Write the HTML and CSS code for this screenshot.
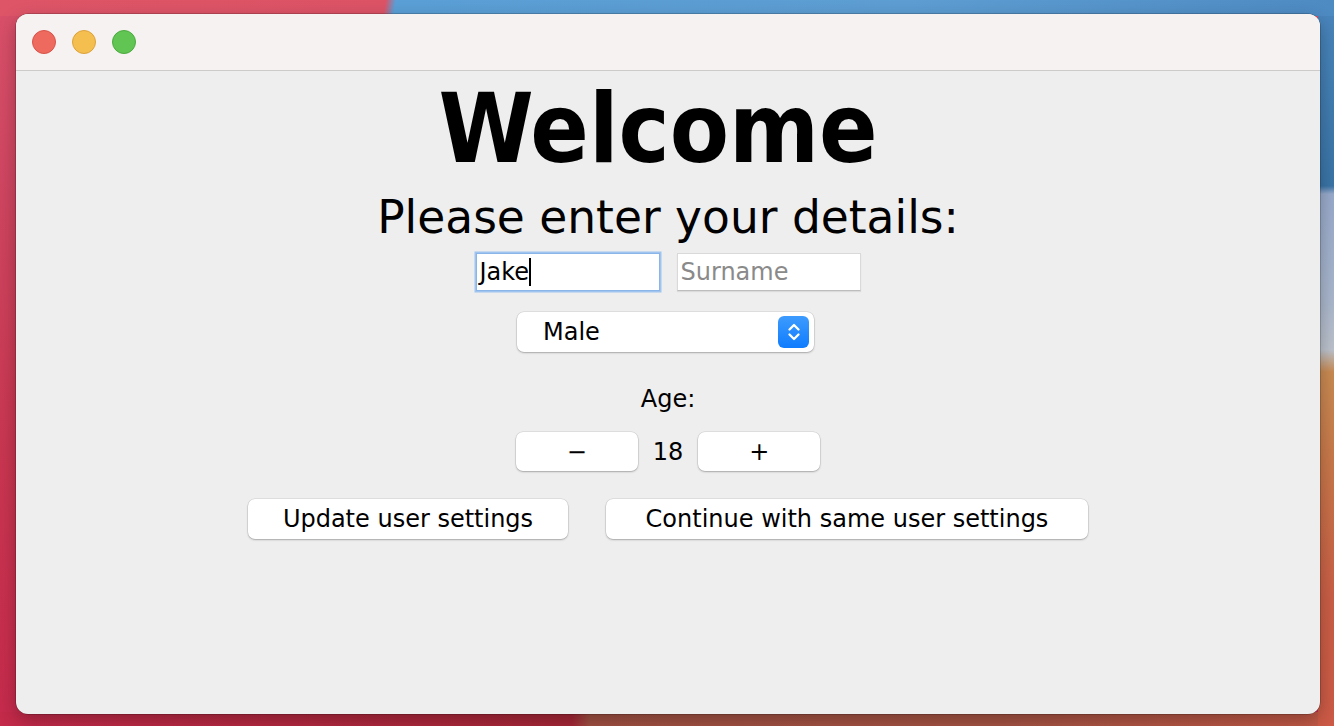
FILE: index.html
```html
<!DOCTYPE html>
<html lang="en">
<head>
<meta charset="utf-8">
<title>Welcome</title>
<link rel="stylesheet" href="styles.css">
</head>
<body>
<div class="window">
  <div class="titlebar">
    <span class="light red"></span>
    <span class="light yellow"></span>
    <span class="light green"></span>
  </div>
  <div class="content">
    <h1 class="title">Welcome</h1>
    <p class="subtitle">Please enter your details:</p>
    <div class="fields">
      <div class="field focused"><span class="value">Jake</span><span class="caret"></span></div>
      <div class="field"><span class="placeholder">Surname</span></div>
    </div>
    <div class="select">
      <span class="select-text">Male</span>
      <span class="select-arrows">
        <svg width="16" height="24" viewBox="0 0 16 24"><path d="M3.5 9.5 L8 5 L12.5 9.5 M3.5 14.5 L8 19 L12.5 14.5" fill="none" stroke="#fff" stroke-width="2.3" stroke-linecap="round" stroke-linejoin="round"/></svg>
      </span>
    </div>
    <div class="age-label">Age:</div>
    <div class="stepper">
      <button class="btn step">−</button>
      <span class="age-value">18</span>
      <button class="btn step">+</button>
    </div>
    <div class="actions">
      <button class="btn update">Update user settings</button>
      <button class="btn continue">Continue with same user settings</button>
    </div>
  </div>
</div>
</body>
</html>
```

FILE: styles.css
```css
html, body {
  margin: 0;
  padding: 0;
  height: 100%;
}

body {
  width: 1334px;
  height: 726px;
  overflow: hidden;
  font-family: "DejaVu Sans", "Liberation Sans", sans-serif;
  background:
    linear-gradient(100deg, #de5568 0, #dc5366 380px, #5a9fd6 390px, #5d9dd2 900px, #4d8ac2 1334px) top left / 100% 16px no-repeat,
    linear-gradient(180deg, #4a86bd 0, #3a74a6 186px, #98aacb 194px, #a9b6cc 300px, #bcc2cc 350px, #c88a52 372px, #c8784a 460px, #c95e46 600px, #cc5a46 726px) top right / 16px 100% no-repeat,
    linear-gradient(90deg, #c42a4a 0, #a52636 572px, #a05042 590px, #a55343 1000px, #c25846 1334px) bottom left / 100% 14px no-repeat,
    linear-gradient(180deg, #d9506a 0, #cf4560 200px, #c93650 450px, #c62a4c 726px);
}

.window {
  margin: 14px 14px 0 16px;
  width: 1304px;
  height: 700px;
  border-radius: 12px;
  overflow: hidden;
  background: #eeeeee;
  box-shadow: 0 0 0 0.5px rgba(0, 0, 0, 0.35), 0 6px 18px rgba(0, 0, 0, 0.28);
  display: flex;
  flex-direction: column;
}

.titlebar {
  flex: none;
  height: 57px;
  box-sizing: border-box;
  background: #f6f2f1;
  border-bottom: 1px solid #cdcbca;
  display: flex;
  align-items: center;
  gap: 16px;
  padding-left: 16px;
}

.light {
  width: 24px;
  height: 24px;
  border-radius: 50%;
  box-sizing: border-box;
}
.light.red { background: #ee6a5f; border: 1px solid #d95248; }
.light.yellow { background: #f5bf4f; border: 1px solid #dca23a; }
.light.green { background: #61c554; border: 1px solid #4aab3d; }

.content {
  flex: 1;
  display: flex;
  flex-direction: column;
  align-items: center;
  color: #000;
}

.title {
  margin: 10px 0 0 -20px;
  font-size: 96px;
  line-height: 96px;
  font-weight: bold;
  font-stretch: condensed;
  font-family: "DejaVu Sans Condensed", "DejaVu Sans", sans-serif;
}

.subtitle {
  margin: 18px 0 0 0;
  font-size: 45.5px;
  line-height: 45px;
}

.fields {
  margin-top: 13px;
  display: flex;
  gap: 17px;
}

.field {
  width: 184px;
  height: 38px;
  box-sizing: border-box;
  background: #fff;
  border: 1px solid #d9d9d9;
  border-bottom-color: #bdbdbd;
  box-shadow: 0 1px 1px rgba(0, 0, 0, 0.08);
  display: flex;
  align-items: center;
  padding-left: 3px;
  font-size: 24px;
}

.field.focused {
  border: 1px solid #8bb5e8;
  box-shadow: 0 0 0 1.5px #9fc4f0;
}

.value { color: #000; }
.caret {
  width: 2px;
  height: 28px;
  background: #000;
}
.placeholder { color: #8a8a8a; }

.select {
  margin-top: 21px;
  margin-right: 5px;
  width: 297px;
  height: 40px;
  box-sizing: border-box;
  background: #fff;
  border-radius: 7px;
  box-shadow: 0 0 0 0.5px rgba(0, 0, 0, 0.12), 0 1px 2px rgba(0, 0, 0, 0.25);
  display: flex;
  align-items: center;
  justify-content: space-between;
  padding: 0 5px 0 26px;
  font-size: 24px;
}

.select-arrows {
  width: 31px;
  height: 32px;
  border-radius: 6px;
  background: linear-gradient(180deg, #3d9bfd 0%, #0f7cfe 100%);
  display: flex;
  align-items: center;
  justify-content: center;
}

.age-label {
  margin-top: 33px;
  font-size: 24px;
  line-height: 29px;
}

.stepper {
  margin-top: 18px;
  display: flex;
  align-items: center;
  gap: 15px;
}

.age-value {
  font-size: 24px;
}

.btn {
  font-family: "DejaVu Sans", "Liberation Sans", sans-serif;
  font-size: 24px;
  color: #000;
  background: #fff;
  border: none;
  border-radius: 7px;
  box-shadow: 0 0 0 0.5px rgba(0, 0, 0, 0.12), 0 1px 2px rgba(0, 0, 0, 0.25);
  padding: 0;
  height: 39px;
  box-sizing: border-box;
}

.btn.step {
  width: 122px;
}

.actions {
  margin-top: 28px;
  display: flex;
  gap: 38px;
}

.btn.update {
  width: 320px;
  height: 40px;
}

.btn.continue {
  width: 482px;
  height: 40px;
}
```
